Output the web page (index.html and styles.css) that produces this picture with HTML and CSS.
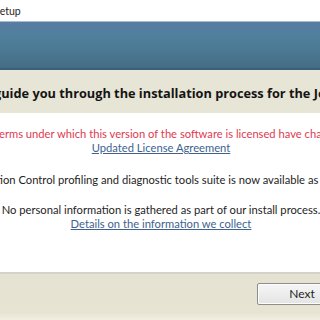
FILE: index.html
```html
<!DOCTYPE html>
<html lang="en">
<head>
<meta charset="UTF-8">
<title>Setup</title>
<link rel="stylesheet" href="styles.css">
</head>
<body>

<div class="window">
  <div class="title-bar"><span class="title-text">Setup</span></div>

  <div class="banner"></div>

  <div class="intro">
    <span class="intro-text">guide you through the installation process for the JetBrains dotTrace</span>
  </div>

  <div class="content">
    <div class="notice">
      <p class="warning">The terms under which this version of the software is licensed have changed.</p>
      <a href="#" class="link">Updated License Agreement</a>
    </div>
    <div class="notice">
      <p>Application Control profiling and diagnostic tools suite is now available as a plugin.</p>
    </div>
    <div class="notice">
      <p>No personal information is gathered as part of our install process.</p>
      <a href="#" class="link">Details on the information we collect</a>
    </div>
  </div>

  <div class="footer">
    <button class="next">Next</button>
  </div>
</div>

</body>
</html>
```

FILE: styles.css
```css
/* Page */
body {
  margin: 0;
  overflow: hidden;
  background: #ffffff;
  font-family: Lato, "Open Sans", sans-serif;
  color: #1e1e1e;
}

/* Wide dialog, cropped by the viewport */
.window {
  width: 640px;
  margin-left: -159px;
  height: 320px;
  display: flex;
  flex-direction: column;
}

/* Title bar */
.title-bar {
  height: 21px;
  display: flex;
  align-items: center;
  font-size: 10.5px;
  background: #ffffff;
}

.title-text {
  margin-left: 153px;
}

/* Blue banner */
.banner {
  height: 46px;
  border-top: 1px solid #a8bccd;
  border-bottom: 2px solid #3d6079;
  background: linear-gradient(to bottom, #5a7ca3 0%, #4f809c 30%, #4b7690 70%, #456c87 100%);
}

/* Beige intro band */
.intro {
  height: 41px;
  background: #e7e5d6;
  display: flex;
  align-items: center;
  padding-top: 2px;
}

.intro-text {
  margin-left: 153px;
  font-family: "Open Sans", sans-serif;
  font-size: 12.75px;
  font-weight: bold;
  white-space: nowrap;
  color: #141414;
}

/* Notices */
.content {
  flex: 1;
  padding-top: 14px;
  text-align: center;
  font-size: 11.2px;
  line-height: 14px;
}

.notice {
  margin-bottom: 16px;
}

.notice:first-child {
  margin-bottom: 18px;
}

.notice p {
  margin: 0;
  white-space: nowrap;
}

.warning {
  color: #e03a52;
}

.link {
  color: #3e6290;
  text-decoration: underline;
}

/* Footer */
.footer {
  height: 38px;
  border-top: 2px solid #d3d2ca;
  background: linear-gradient(to bottom, #e5e2d2, #e7e4d4 85%, #f1efe2);
  padding-left: 416px;
  padding-top: 8px;
}

.next {
  width: 90px;
  height: 22px;
  font-family: inherit;
  font-size: 12px;
  color: #1e1e1e;
  background: linear-gradient(to bottom, #f6f6f6, #e4e4e4);
  border: 1px solid #8e8e8e;
  border-radius: 2px;
  box-shadow: inset 0 0 0 1px #fcfcfc;
  padding: 0;
}
```
